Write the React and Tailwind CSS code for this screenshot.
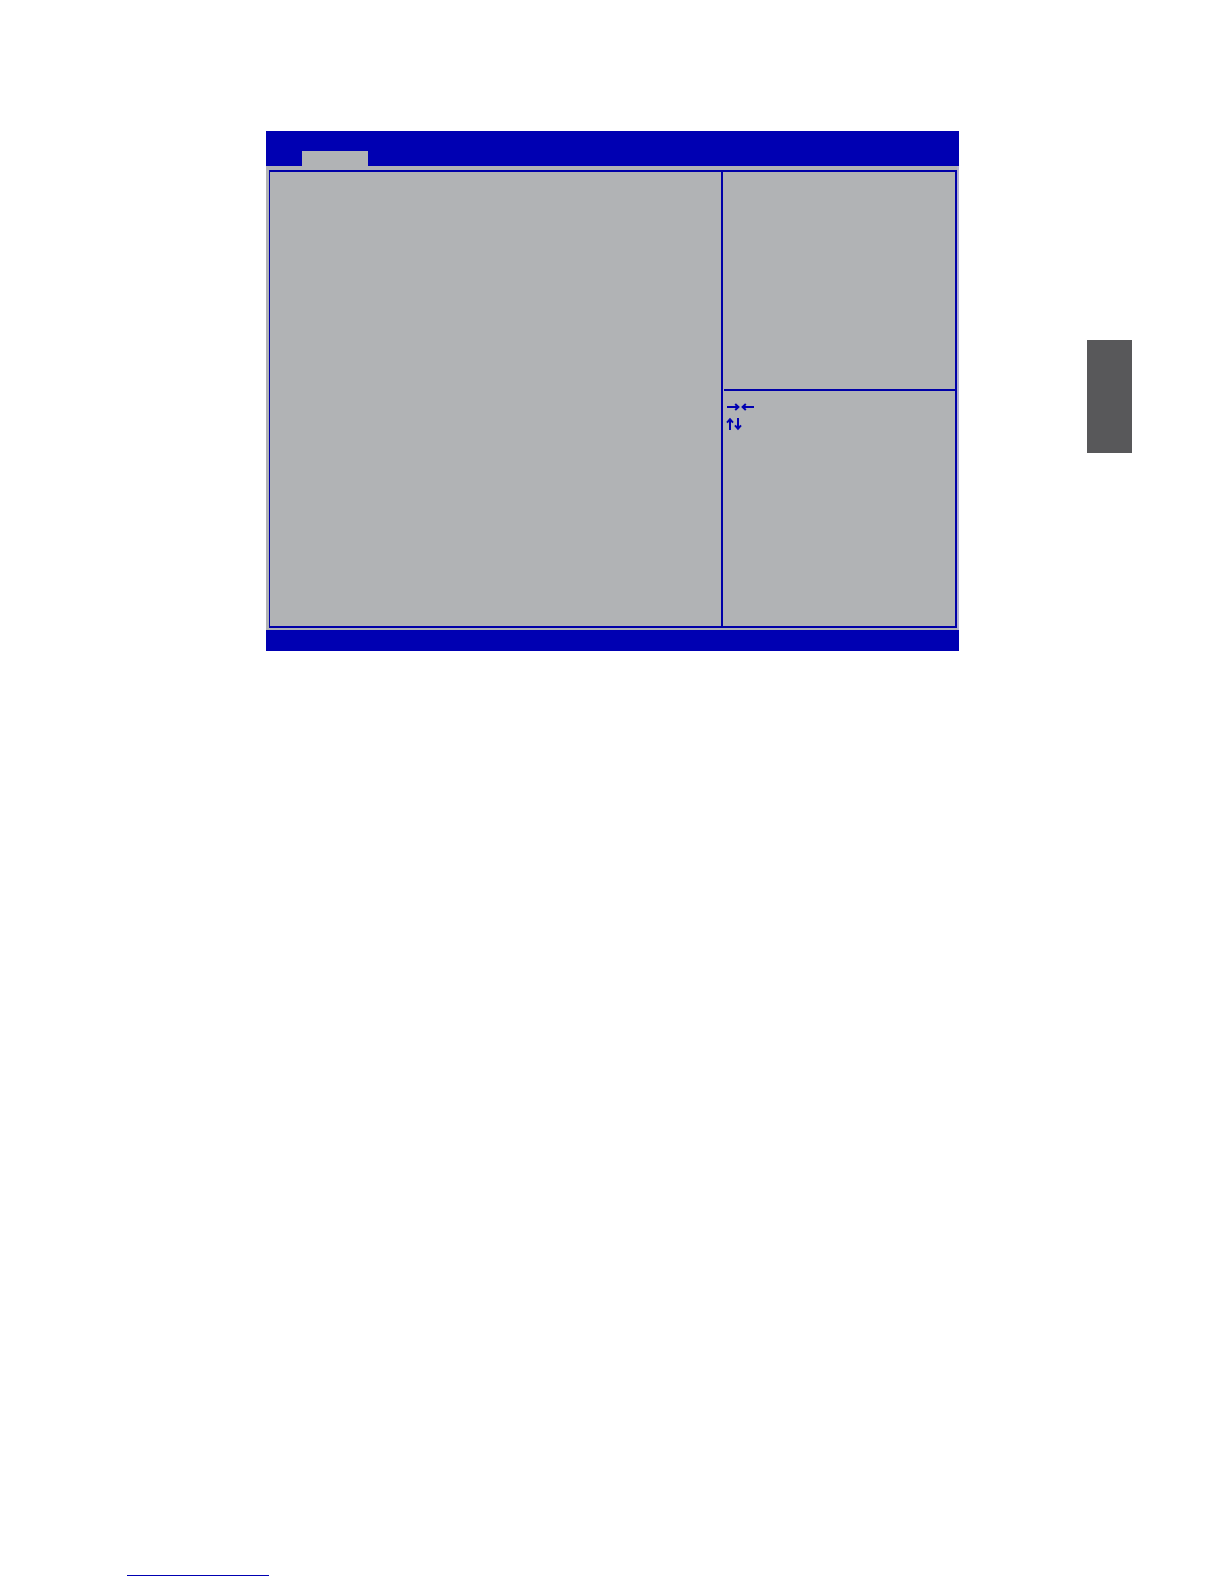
function ArrowRight() {
  return (
    <svg className="h-3 w-3.5" viewBox="0 0 14 12" fill="none" stroke="currentColor" strokeWidth="2">
      <path d="M1 6H12" />
      <path d="M9.2 3L12.4 6L9.2 9" />
    </svg>
  );
}

function ArrowUp() {
  return (
    <svg className="h-3.5 w-2" viewBox="0 0 8 14" fill="none" stroke="currentColor" strokeWidth="2">
      <path d="M4 13V2" />
      <path d="M1 5.6L4 2.2L7 5.6" />
    </svg>
  );
}

function KeyHints() {
  return (
    <div className="flex flex-col gap-1 pt-2.5 pl-[3px] text-[#0000b2]">
      <div className="flex gap-px">
        <ArrowRight />
        <div className="rotate-180">
          <ArrowRight />
        </div>
      </div>
      <div className="flex">
        <ArrowUp />
        <div className="rotate-180">
          <ArrowUp />
        </div>
      </div>
    </div>
  );
}

function SetupScreen() {
  return (
    <section className="flex min-h-[520px] flex-1 flex-col bg-[#b1b3b5]">
      {/* Menu bar with the active tab */}
      <header className="flex h-[35px] items-end bg-[#0000b2] pl-9">
        <div className="h-[15px] w-[66px] bg-[#b1b3b5]" />
      </header>

      <div className="flex flex-1 border-r-2 border-[#b4b3d2] pt-1 pb-0.5 pl-[3px]">
        <div className="flex flex-1 border-2 border-l border-[#0000a8]">
          <main className="flex-1" />

          {/* Help and keys */}
          <aside className="flex w-[234px] flex-col border-l-2 border-[#0000a8]">
            <div className="ml-px h-[219px] border-b-2 border-[#0000a8]" />
            <KeyHints />
          </aside>
        </div>
      </div>

      <footer className="h-[21px] bg-[#0000b2]" />
    </section>
  );
}

export default function App() {
  return (
    <div className="flex min-h-screen flex-col justify-between bg-white pt-[131px] pb-2">
      <div className="flex items-start pr-[92px] pl-[266px]">
        <SetupScreen />
        {/* Chapter marker on the page edge */}
        <div className="mt-[209px] ml-32 h-[113px] w-[45px] bg-[#58585a]" />
      </div>
      <div className="ml-[127px] w-[142px] border-t border-[#0000b2]" />
    </div>
  );
}
